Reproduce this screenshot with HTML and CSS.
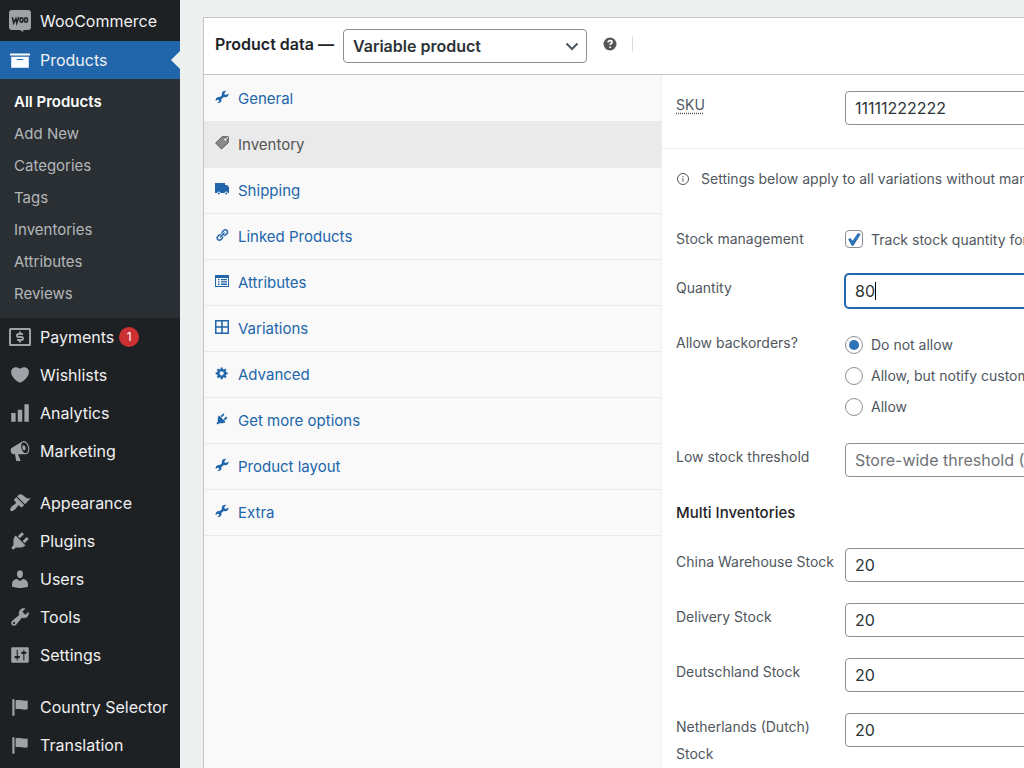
FILE: index.html
```
<!DOCTYPE html>
<html lang="en">
  <head>
    <meta charset="UTF-8" />
    <meta name="viewport" content="width=device-width, initial-scale=1.0" />
    <title>Edit product</title>
    <link rel="stylesheet" href="styles.css">
  </head>
  <body>
    <svg class="sprite" aria-hidden="true">
      <symbol id="wrench" viewBox="0 0 20 20"><path d="M16.68 9.77c-1.34 1.34-3.3 1.67-4.95.99l-5.41 6.52c-.99.99-2.59.99-3.58 0s-.99-2.59 0-3.57l6.52-5.42c-.68-1.65-.35-3.61.99-4.95 1.28-1.28 3.12-1.62 4.72-1.06l-2.89 2.89 2.82 2.82 2.86-2.87c.53 1.58.18 3.39-1.08 4.65zM3.81 16.21c.4.39 1.04.39 1.43 0 .4-.4.4-1.04 0-1.43-.39-.4-1.03-.4-1.43 0-.39.39-.39 1.03 0 1.43z"/></symbol>
      <symbol id="spanner" viewBox="0 0 14 14"><path d="M13.4 3.4l-2.3 1.5-1.5-.5-.3-1.5L11.2.9C9.6.3 7.4 1.1 6.9 3c-.2.7-.1 1.4.1 2L4.9 7.1C3.6 6.7 1.8 7.1 1 8.6c-.4.8-.4 1.6-.2 2.3l1.9-1.2 1.2.4.2 1.3-1.9 1.4c1.6.6 3.7-.1 4.2-2 .2-.6.1-1.2 0-1.7L8.7 7.1c1.9.5 4-.2 4.6-1.9.2-.6.2-1.2.1-1.8z"/></symbol>
      <symbol id="plug" viewBox="0 0 20 20"><path d="M13.11 4.36L9.87 7.6 8 5.73l3.24-3.24c.35-.34 1.05-.2 1.56.32.52.51.66 1.21.31 1.55zm-8 1.77l.91-1.12 9.01 9.01-1.19.84c-.71.71-2.63 1.16-3.82 1.16H6.14L4.9 17.26c-.59.59-1.54.59-2.12 0-.59-.58-.59-1.53 0-2.12l1.24-1.24v-3.88c0-1.13.4-3.19 1.09-3.89zm7.26 3.97l3.24-3.24c.34-.35 1.04-.21 1.55.31.52.51.66 1.21.31 1.55l-3.24 3.25z"/></symbol>
      <symbol id="flag" viewBox="0 0 20 20"><path d="M5 18V3H3v15h2zm1-6V4c3-1 7 1 11 0v8c-3 1.27-8-1-11 0z"/></symbol>
    </svg>

    <div class="layout">
      <nav class="sidebar">
        <ul class="menu">
          <li>
            <a class="menu-link menu-first" href="#">
              <svg class="menu-icon woo" viewBox="0 0 22 22"><path d="M3 0h16a3 3 0 0 1 3 3v14a3 3 0 0 1-3 3h-5l.6 2-4-2H3a3 3 0 0 1-3-3V3a3 3 0 0 1 3-3z"/><path class="woo-mark" d="M3.300 7.200l1.400 5.800 2.200-4.400.9 4.400 1.900-6"/><ellipse class="woo-mark" cx="12.500" cy="10" rx="1.500" ry="2.200"/><ellipse class="woo-mark" cx="17" cy="10" rx="1.500" ry="2.200"/></svg>
              WooCommerce
            </a>
          </li>
          <li>
            <a class="menu-link current" href="#">
              <svg class="menu-icon" viewBox="0 0 20 20"><path d="M19 4v2H1V4h18zM2 7h16v10H2V7zm11 3V9H7v1h6z"/></svg>
              Products
            </a>
            <ul class="submenu">
              <li><a class="active" href="#">All Products</a></li>
              <li><a href="#">Add New</a></li>
              <li><a href="#">Categories</a></li>
              <li><a href="#">Tags</a></li>
              <li><a href="#">Inventories</a></li>
              <li><a href="#">Attributes</a></li>
              <li><a href="#">Reviews</a></li>
            </ul>
          </li>
          <li>
            <a class="menu-link" href="#">
              <svg class="menu-icon" viewBox="0 0 22 22"><path fill-rule="evenodd" d="M1.500 2h19A1.500 1.500 0 0 1 22 3.500v15a1.500 1.500 0 0 1-1.500 1.500h-19A1.500 1.500 0 0 1 0 18.500v-15A1.500 1.500 0 0 1 1.500 2zM2 4v14h18V4z"/><path class="dollar" d="M14 8H9.500a1.500 1.500 0 0 0 0 3h3a1.500 1.500 0 0 1 0 3H8M11 5.500V8M11 14v2.500"/></svg>
              Payments
              <span class="badge">1</span>
            </a>
          </li>
          <li>
            <a class="menu-link" href="#">
              <svg class="menu-icon" viewBox="0 0 20 20"><path d="M10 17.12c3.33-1.4 5.74-3.79 7.04-6.21 1.28-2.41 1.46-4.81.32-6.25-1.03-1.29-2.37-1.78-3.73-1.74s-2.68.63-3.63 1.46c-.95-.83-2.27-1.42-3.63-1.46s-2.7.45-3.73 1.74c-1.14 1.44-.96 3.84.34 6.25 1.28 2.42 3.69 4.81 7.02 6.21z"/></svg>
              Wishlists
            </a>
          </li>
          <li>
            <a class="menu-link" href="#">
              <svg class="menu-icon" viewBox="0 0 20 20"><path d="M18 18V2h-4v16h4zm-6 0V7H8v11h4zm-6 0v-8H2v8h4z"/></svg>
              Analytics
            </a>
          </li>
          <li>
            <a class="menu-link" href="#">
              <svg class="menu-icon" viewBox="0 0 20 20"><path d="M18.15 5.94c.46 1.62.38 3.22-.02 4.48-.42 1.28-1.26 2.18-2.3 2.48-.16.06-.26.06-.4.06-.06.02-.12.02-.18.02-.06.02-.14.02-.22.02h-6.8l2.22 5.5c.02.14-.06.26-.14.34-.08.1-.24.16-.34.16H6.95c-.1 0-.26-.06-.34-.16-.08-.08-.16-.2-.14-.34l-1-5.5H4.25l-.02-.02c-.5.06-1.08-.18-1.54-.62s-.88-1.08-1.06-1.88c-.24-.8-.2-1.56-.02-2.2.18-.62.58-1.08 1.06-1.3l.02-.02 9-5.4c.1-.06.18-.1.24-.16.06-.04.14-.08.24-.12.16-.08.28-.12.5-.18 1.04-.3 2.24.1 3.22.98s1.84 2.24 2.26 3.86zm-2.58 5.98h-.02c.4-.1.74-.34 1.04-.7.58-.7.86-1.76.86-3.04 0-.64-.1-1.3-.28-1.98-.34-1.36-1.02-2.5-1.78-3.24s-1.68-1.1-2.46-.88c-.82.22-1.4.96-1.7 2-.32 1.04-.28 2.36.06 3.72.38 1.36 1 2.5 1.8 3.24.78.74 1.62 1.1 2.48.88zm-2.54-7.08c.22-.04.42-.02.62.04.38.16.76.48 1.02 1s.42 1.2.42 1.78c0 .3-.04.56-.12.8-.18.48-.44.84-.86.94-.34.1-.8-.06-1.14-.4s-.64-.86-.78-1.5c-.18-.62-.12-1.24.02-1.72s.48-.84.82-.94z"/></svg>
              Marketing
            </a>
          </li>
        </ul>
        <ul class="menu">
          <li>
            <a class="menu-link" href="#">
              <svg class="menu-icon" viewBox="0 0 20 20"><path d="M14.48 11.06L7.41 3.99l1.5-1.5c.5-.56 2.3-.47 3.51.32 1.21.8 1.43 1.28 2.91 2.1 1.18.64 2.45 1.26 4.45.85zm-.71.71L6.7 4.7 4.93 6.47c-.39.39-.39 1.02 0 1.41l1.06 1.06c.39.39.39 1.03 0 1.42-.6.6-1.43 1.11-2.21 1.69-.35.26-.7.53-1.01.84C1.43 14.23.4 16.08 1.4 17.07c.99 1 2.84-.03 4.18-1.36.31-.31.58-.66.85-1.02.57-.78 1.08-1.61 1.69-2.21.39-.39 1.02-.39 1.41 0l1.06 1.06c.39.39 1.02.39 1.41 0z"/></svg>
              Appearance
            </a>
          </li>
          <li>
            <a class="menu-link" href="#"><svg class="menu-icon"><use href="#plug"/></svg>Plugins</a>
          </li>
          <li>
            <a class="menu-link" href="#">
              <svg class="menu-icon" viewBox="0 0 20 20"><path d="M10 9.25c-2.27 0-2.73-3.44-2.73-3.44C7 4.02 7.82 2 9.97 2c2.16 0 2.98 2.02 2.71 3.81 0 0-.41 3.44-2.68 3.44zm0 2.57L12.72 10c2.39 0 4.52 2.33 4.52 4.53v2.49s-3.65 1.13-7.24 1.13c-3.65 0-7.24-1.13-7.24-1.13v-2.49c0-2.25 1.94-4.48 4.47-4.48z"/></svg>
              Users
            </a>
          </li>
          <li>
            <a class="menu-link" href="#"><svg class="menu-icon"><use href="#wrench"/></svg>Tools</a>
          </li>
          <li>
            <a class="menu-link" href="#">
              <svg class="menu-icon" viewBox="0 0 20 20"><path d="M18 16V4c0-.55-.45-1-1-1H3c-.55 0-1 .45-1 1v12c0 .55.45 1 1 1h14c.55 0 1-.45 1-1zM8 11h1c.55 0 1 .45 1 1s-.45 1-1 1H8v1.5c0 .28-.22.5-.5.5s-.5-.22-.5-.5V13H6c-.55 0-1-.45-1-1s.45-1 1-1h1V5.5c0-.28.22-.5.5-.5s.5.22.5.5V11zm5-2h-1c-.55 0-1-.45-1-1s.45-1 1-1h1V5.5c0-.28.22-.5.5-.5s.5.22.5.5V7h1c.55 0 1 .45 1 1s-.45 1-1 1h-1v5.5c0 .28-.22.5-.5.5s-.5-.22-.5-.5V9z"/></svg>
              Settings
            </a>
          </li>
        </ul>
        <ul class="menu">
          <li>
            <a class="menu-link" href="#"><svg class="menu-icon"><use href="#flag"/></svg>Country Selector</a>
          </li>
          <li>
            <a class="menu-link" href="#"><svg class="menu-icon"><use href="#flag"/></svg>Translation</a>
          </li>
        </ul>
      </nav>

      <main class="postbox">
        <div class="postbox-header">
          <label for="product-type">Product data —</label>
          <span class="select-wrap">
            <select id="product-type">
              <option>Variable product</option>
              <option>Simple product</option>
            </select>
            <svg class="chevron" viewBox="0 0 14 14"><path d="M1.500 4.500L7 10l5.500-5.500"/></svg>
          </span>
          <svg class="help" viewBox="0 0 14 14"><circle cx="7" cy="7" r="6.500"/><path d="M5 5.400c.1-1.200 1-1.800 2.100-1.800s2 .6 2 1.600c0 1.300-2 1.300-2 2.900M7.100 9.400v1.500"/></svg>
          <span class="divider"></span>
        </div>

        <div class="panels">
          <ul class="tabs">
            <li><a href="#"><svg class="tab-icon"><use href="#spanner"/></svg>General</a></li>
            <li class="active"><a href="#"><svg class="tab-icon" viewBox="0 0 14 14"><path fill-opacity=".65" stroke="currentColor" d="M.7 7L7.200.7l2.600 0 3.500 3.500v2.300L6.500 13z"/><circle class="tag-hole" cx="10.500" cy="3.500" r="1.200"/><path fill="none" stroke="currentColor" d="M9.800.7h3.500v3.500"/></svg>Inventory</a></li>
            <li><a href="#"><svg class="tab-icon" viewBox="0 0 14 14"><path d="M0 1h10v2h2l2 2v6h-1.200a1.600 1.600 0 0 0-3.200 0H5.400a1.600 1.600 0 0 0-3.200 0H0z"/><circle cx="3.800" cy="11.400" r="1"/><circle cx="11.200" cy="11.400" r="1"/></svg>Shipping</a></li>
            <li><a href="#"><svg class="tab-icon" viewBox="0 0 20 20"><path d="M17.74 2.76c1.68 1.69 1.68 4.41 0 6.1l-1.53 1.52c-1.12 1.12-2.7 1.47-4.14 1.09l2.62-2.61.76-.77.76-.76c.84-.84.84-2.2 0-3.04-.84-.85-2.2-.85-3.04 0l-.77.76-3.38 3.38c-.37-1.44-.02-3.02 1.1-4.14l1.52-1.53c1.69-1.68 4.42-1.68 6.1 0zM8.59 13.43l5.34-5.34c.42-.42.42-1.1 0-1.52-.44-.43-1.13-.39-1.53 0l-5.33 5.34c-.42.42-.42 1.1 0 1.52.44.43 1.13.39 1.52 0zm-.76 2.29l4.14-4.15c.38 1.44.03 3.02-1.09 4.14l-1.52 1.53c-1.69 1.68-4.41 1.68-6.1 0-1.68-1.68-1.68-4.42 0-6.1l1.53-1.52c1.12-1.12 2.7-1.47 4.14-1.1l-4.14 4.15c-.85.84-.85 2.2 0 3.05.84.84 2.2.84 3.04 0z"/></svg>Linked Products</a></li>
            <li><a href="#"><svg class="tab-icon" viewBox="0 0 14 14"><path fill-rule="evenodd" d="M0 1h14v12H0zM1 4v8h12V4zM3 5h1.500v1.300H3zm3 0h6v1.300H6zM3 7.300h1.500v1.300H3zm3 0h6v1.300H6zM3 9.600h1.500v1.300H3zm3 0h6v1.300H6z"/></svg>Attributes</a></li>
            <li><a href="#"><svg class="tab-icon" viewBox="0 0 14 14"><path fill-rule="evenodd" d="M0 0h14v14H0zM1.500 1.500v4.700h4.700V1.500zM7.800 1.500v4.700h4.700V1.500zM1.500 7.800v4.700h4.700V7.800zM7.800 7.800v4.700h4.700V7.800z"/></svg>Variations</a></li>
            <li><a href="#"><svg class="tab-icon" viewBox="0 0 20 20"><path d="M18 12h-2.18c-.17.7-.44 1.35-.81 1.93l1.54 1.54-2.1 2.1-1.54-1.54c-.58.36-1.23.63-1.91.79V19H8v-2.18c-.68-.16-1.33-.43-1.91-.79l-1.54 1.54-2.12-2.12 1.54-1.54c-.36-.58-.63-1.23-.79-1.91H1V9.03h2.17c.16-.7.44-1.35.8-1.94L2.43 5.55l2.1-2.1 1.54 1.54c.58-.37 1.24-.64 1.93-.81V2h3v2.18c.68.16 1.33.43 1.91.79l1.54-1.54 2.12 2.12-1.54 1.54c.36.59.64 1.24.8 1.94H18V12zm-8.5 1.5c1.66 0 3-1.34 3-3s-1.34-3-3-3-3 1.34-3 3 1.34 3 3 3z"/></svg>Advanced</a></li>
            <li><a href="#"><svg class="tab-icon"><use href="#plug"/></svg>Get more options</a></li>
            <li><a href="#"><svg class="tab-icon"><use href="#spanner"/></svg>Product layout</a></li>
            <li><a href="#"><svg class="tab-icon"><use href="#spanner"/></svg>Extra</a></li>
          </ul>

          <form class="fields">
            <div class="section">
              <div class="row">
                <label for="sku"><abbr title="Stock Keeping Unit">SKU</abbr></label>
                <input class="text" type="text" id="sku" value="11111222222" />
              </div>
            </div>

            <div class="section">
              <p class="notice">
                <svg class="info" viewBox="0 0 14 14"><circle cx="7" cy="7" r="5.500"/><path d="M7 6.200v3.600M7 4.100v1.100"/></svg>
                Settings below apply to all variations without manual stock management enabled.
              </p>
              <div class="row">
                <span>Stock management</span>
                <label class="choice"><input type="checkbox" checked /> Track stock quantity for this product</label>
              </div>
              <div class="row">
                <label for="quantity">Quantity</label>
                <div class="editing">
                  <input class="text focused" type="text" id="quantity" value="80" />
                  <span class="caret"></span>
                </div>
              </div>
              <div class="row">
                <span>Allow backorders?</span>
                <div class="choices">
                  <label class="choice"><input type="radio" name="backorders" checked /> Do not allow</label>
                  <label class="choice"><input type="radio" name="backorders" /> Allow, but notify customer</label>
                  <label class="choice"><input type="radio" name="backorders" /> Allow</label>
                </div>
              </div>
              <div class="row">
                <label for="threshold">Low stock threshold</label>
                <input class="text" type="text" id="threshold" placeholder="Store-wide threshold (2)" />
              </div>

              <h4>Multi Inventories</h4>
              <div class="row">
                <label for="stock-china">China Warehouse Stock</label>
                <input class="text" type="text" id="stock-china" value="20" />
              </div>
              <div class="row">
                <label for="stock-delivery">Delivery Stock</label>
                <input class="text" type="text" id="stock-delivery" value="20" />
              </div>
              <div class="row">
                <label for="stock-de">Deutschland Stock</label>
                <input class="text" type="text" id="stock-de" value="20" />
              </div>
              <div class="row">
                <label for="stock-nl">Netherlands (Dutch) Stock</label>
                <input class="text" type="text" id="stock-nl" value="20" />
              </div>
            </div>
          </form>
        </div>
      </main>
    </div>
  </body>
</html>
```
FILE: styles.css
```
* {
  box-sizing: border-box;
}
body {
  margin: 0;
  background: #eeefef;
  color: #50575e;
  font-family: Inter, "Liberation Sans", sans-serif;
  font-size: 14px;
  height: 100vh;
  overflow: hidden;
}
ul {
  list-style: none;
  margin: 0;
  padding: 0;
}
a {
  text-decoration: none;
}
svg {
  fill: currentColor;
  flex: none;
}
.sprite {
  display: none;
}
.layout {
  display: flex;
  min-height: 100vh;
}

/* admin menu */
.sidebar {
  flex: none;
  width: 180px;
  background: #1d2124;
}
.menu {
  margin-bottom: 14px;
}
.menu-link {
  position: relative;
  display: flex;
  align-items: center;
  gap: 9px;
  height: 38px;
  padding-left: 9px;
  color: #f0f0f1;
  font-size: 16px;
  white-space: nowrap;
}
.menu-first {
  height: 41px;
}
.menu-icon {
  width: 22px;
  height: 22px;
  color: #9ea3a8;
}
.woo-mark {
  fill: none;
  stroke: #1d2124;
  stroke-width: 1.5;
}
.dollar {
  fill: none;
  stroke: currentColor;
  stroke-width: 2;
}
.current {
  background: #2166ab;
}
.current .menu-icon {
  color: #fff;
}
.current::after {
  content: "";
  position: absolute;
  right: 0;
  top: 10px;
  border: 9px solid transparent;
  border-left: 0;
  border-right-color: #eeefef;
}
.submenu {
  background: #2a2f33;
  padding: 7px 0 8px;
}
.submenu a {
  display: block;
  padding-left: 14px;
  line-height: 32px;
  font-size: 15px;
  color: #b4b7ba;
}
.submenu .active {
  color: #fff;
  font-weight: 600;
}
.badge {
  width: 20px;
  margin-left: -4px;
  border-radius: 10px;
  background: #cc3033;
  color: #fff;
  font-size: 12px;
  line-height: 20px;
  text-align: center;
}

/* product data box */
.postbox {
  flex: 1 0 900px;
  margin: 17px 0 0 23px;
  border: 1px solid #c3c4c7;
  background: #fff;
}
.postbox-header {
  display: flex;
  align-items: center;
  height: 57px;
  padding: 0 11px;
  border-bottom: 1px solid #c3c4c7;
  color: #1d2327;
  font-size: 16px;
  font-weight: 600;
}
.postbox-header label,
.help,
.divider {
  margin-bottom: 4px;
}
.select-wrap {
  position: relative;
  width: 244px;
  margin: 0 16px 0 9px;
}
.select-wrap select {
  appearance: none;
  width: 100%;
  height: 34px;
  padding: 0 9px;
  border: 1px solid #8c8f94;
  border-radius: 4px;
  background: #fff;
  color: #2c3338;
  font: inherit;
}
.chevron {
  position: absolute;
  right: 8px;
  top: 10px;
  width: 14px;
  height: 14px;
  fill: none;
  stroke: #50575e;
  stroke-width: 2;
  pointer-events: none;
}
.help {
  width: 14px;
  height: 14px;
  color: #555;
}
.help path {
  fill: none;
  stroke: #fff;
  stroke-width: 1.6;
}
.divider {
  width: 1px;
  height: 16px;
  margin-left: 15px;
  background: #dcdcde;
}
.panels {
  display: flex;
}
.tabs {
  flex: none;
  width: 458px;
  min-height: 100vh;
  padding-top: 1px;
  border-right: 1px solid #eee;
  background: #f9f9f9;
}
.tabs a {
  display: flex;
  align-items: center;
  gap: 9px;
  height: 46px;
  padding-left: 11px;
  border-bottom: 1px solid #eaeaea;
  color: #2166ab;
  font-size: 15px;
}
.tabs .active a {
  background: #eaeaea;
  color: #555;
}
.tab-icon {
  width: 14px;
  height: 14px;
  margin-bottom: 4px;
}
.tag-hole {
  fill: #eaeaea;
}

/* inventory fields */
.fields {
  flex: 1;
}
.section {
  padding: 16px 14px 2px;
}
.section + .section {
  border-top: 1px solid #eee;
}
.row {
  display: grid;
  grid-template-columns: 164px 1fr;
  column-gap: 5px;
  min-height: 28px;
  margin-bottom: 21px;
  line-height: 27px;
}
.row abbr {
  text-decoration: underline dotted;
  text-underline-offset: 3px;
}
.text {
  width: 100%;
  height: 34px;
  padding: 0 9px;
  border: 1px solid #8c8f94;
  border-radius: 4px;
  background: #fff;
  color: #2c3338;
  font-family: inherit;
  font-size: 16px;
}
.text::placeholder {
  color: #6f7378;
}
.editing {
  position: relative;
}
.focused {
  border-color: #2166ab;
  box-shadow: 0 0 0 1px #2166ab;
}
.caret {
  position: absolute;
  left: 30px;
  top: 8px;
  width: 1px;
  height: 18px;
  background: #000;
}
.notice {
  display: flex;
  align-items: center;
  gap: 11px;
  margin: 0 0 32px;
  line-height: 28px;
  white-space: nowrap;
}
.info {
  width: 14px;
  height: 14px;
  fill: none;
  stroke: currentColor;
}
.choice {
  display: flex;
  align-items: center;
  gap: 8px;
  white-space: nowrap;
}
.choices .choice {
  height: 31px;
}
.choice input {
  appearance: none;
  display: grid;
  place-content: center;
  width: 18px;
  height: 18px;
  margin: 0;
  border: 1px solid #8c8f94;
  border-radius: 4px;
  background: #fff;
}
.choice input[type="radio"] {
  border-radius: 50%;
}
.choice input[type="radio"]:checked::before {
  content: "";
  width: 10px;
  height: 10px;
  border-radius: 50%;
  background: #2d72b5;
}
.choice input[type="checkbox"]:checked::before {
  content: "";
  width: 14px;
  height: 14px;
  background: #2d72b5;
  clip-path: polygon(8% 52%, 24% 42%, 40% 62%, 78% 8%, 98% 16%, 46% 98%, 34% 98%);
}
h4 {
  margin: 0 0 21px;
  color: #1d2327;
  font-size: 15px;
  font-weight: 500;
  line-height: 29px;
}
```
